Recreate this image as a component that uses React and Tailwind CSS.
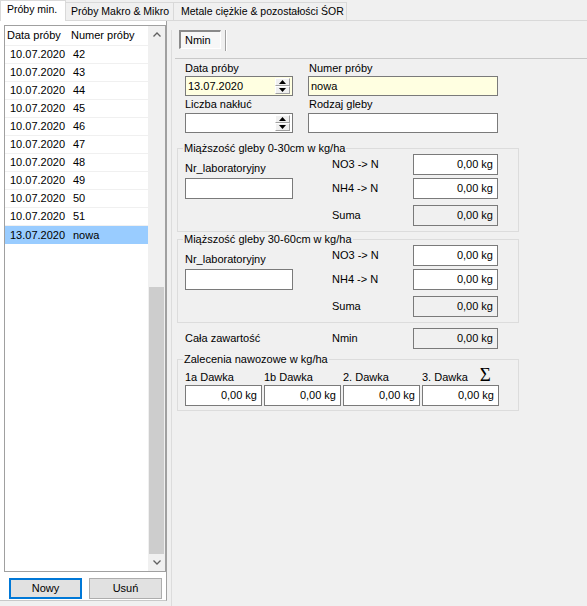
import React from 'react';

const samples = ['42', '43', '44', '45', '46', '47', '48', '49', '50', '51'];

function Arrow({ down }) {
  return (
    <svg width="7" height="4" viewBox="0 0 7 4">
      <path d={down ? 'M0 0H7L3.5 4Z' : 'M0 4H7L3.5 0Z'} fill="#000" />
    </svg>
  );
}

function Chevron({ down }) {
  return (
    <svg width="8" height="5" viewBox="0 0 8 5">
      <path d={down ? 'M0.5 0.5L4 4L7.5 0.5' : 'M0.5 4.5L4 1L7.5 4.5'} fill="none" stroke="#606060" strokeWidth="1.3" />
    </svg>
  );
}

function Spin() {
  return (
    <div className="mr-[2px] flex h-[16px] w-[15px] flex-col">
      <div className="flex h-[8px] items-center justify-center border border-[#a0a0a0] border-t-white border-l-white bg-[#f0f0f0]">
        <Arrow />
      </div>
      <div className="flex h-[8px] items-center justify-center border border-[#a0a0a0] border-t-white border-l-white bg-[#f0f0f0]">
        <Arrow down />
      </div>
    </div>
  );
}

function Num({ gray, className = '' }) {
  return (
    <div
      className={`flex h-[21px] items-center justify-end border border-[#7a7a7a] pr-[4px] ${
        gray ? 'bg-[#f0f0f0]' : 'bg-white'
      } ${className}`}
    >
      0,00 kg
    </div>
  );
}

function Row({ label, gray, className = '' }) {
  return (
    <div className={`flex h-[21px] items-center ${className}`}>
      <span className="w-[81px]">{label}</span>
      <Num gray={gray} className="w-[85px]" />
    </div>
  );
}

function Layer({ title, className = '' }) {
  return (
    <fieldset className={`ml-[5px] w-[342px] border border-[#dcdcdc] pb-[5px] pl-[7px] ${className}`}>
      <legend className="-ml-[2px] px-[1px] leading-[12px]">{title}</legend>
      <div className="flex">
        <div className="w-[108px] pt-[8px]">
          <div className="leading-[13px]">Nr_laboratoryjny</div>
          <div className="mt-[3px] h-[21px] border border-[#7a7a7a] bg-white" />
        </div>
        <div className="ml-[39px] flex flex-col">
          <Row label="NO3 -> N" />
          <Row label="NH4 -> N" className="mt-[3px]" />
          <Row label="Suma" gray className="mt-[6px]" />
        </div>
      </div>
    </fieldset>
  );
}

export default function App() {
  return (
    <div className="flex h-[606px] w-[587px] flex-col overflow-hidden bg-[#f0f0f0] font-['Liberation_Sans',Arial,sans-serif] text-[11px] text-black">
      {/* Tabs */}
      <div className="flex h-[21px] items-end border-b border-[#d9d9d9] text-[10.5px]">
        <div className="relative z-10 -mb-px flex h-[21px] w-[66px] items-center border-x border-t border-[#d9d9d9] bg-white pb-[2px] pl-[6px]">
          Próby min.
        </div>
        <div className="flex h-[18px] w-[108px] items-center border-r border-t border-[#d9d9d9] pl-[5px]">
          Próby Makro &amp; Mikro
        </div>
        <div className="flex h-[18px] w-[173px] items-center border-r border-t border-[#d9d9d9] pl-[7px]">
          Metale ciężkie &amp; pozostałości ŚOR
        </div>
      </div>

      <div className="flex">
        {/* Sample list */}
        <div className="flex h-[580px] w-[167px] flex-col border-b border-r border-[#a0a0a0] border-b-[#c8c8c8] bg-white pl-[4px] pt-[4px]">
          <div className="flex h-[547px] w-[162px] border border-[#a0a0a0]">
            <div className="w-[143px]">
              <div className="flex h-[20px] items-center border-b border-[#f0f0f0] pl-[2px]">
                <span className="w-[64px]">Data próby</span>
                <span>Numer próby</span>
              </div>
              {samples.map((n) => (
                <div key={n} className="flex h-[18px] items-center border-b border-[#f0f0f0] pl-[5px]">
                  <span className="w-[63px]">10.07.2020</span>
                  <span>{n}</span>
                </div>
              ))}
              <div className="flex h-[18px] items-center bg-[#99ccff] pl-[5px]">
                <span className="w-[63px]">13.07.2020</span>
                <span>nowa</span>
              </div>
            </div>
            <div className="flex w-[17px] flex-col bg-[#f0f0f0]">
              <div className="flex h-[17px] items-center justify-center">
                <Chevron />
              </div>
              <div className="h-[244px]" />
              <div className="mx-[1px] h-[267px] bg-[#cdcdcd]" />
              <div className="flex h-[17px] items-center justify-center">
                <Chevron down />
              </div>
            </div>
          </div>
          <div className="mt-[6px] flex gap-[7px] pl-[5px]">
            <button className="flex h-[21px] w-[73px] items-center justify-center border-2 border-[#0078d7] bg-[#e1e1e1]">
              Nowy
            </button>
            <button className="flex h-[21px] w-[73px] items-center justify-center border border-[#adadad] bg-[#e1e1e1]">
              Usuń
            </button>
          </div>
        </div>

        {/* Form */}
        <div className="flex-1 pl-[4px]">
          <div className="h-full border-l border-[#dcdcdc]">
            <div className="ml-[7px] mt-[9px] flex h-[21px] items-start">
              <div className="flex h-[19px] w-[42px] items-center border-l-2 border-t-2 border-[#8a8a8a] border-b border-r border-b-white border-r-white bg-[#f7f7f7] pl-[4px]">
                Nmin
              </div>
              <div className="ml-[4px] h-[21px] w-[2px] border-l border-r border-[#a0a0a0] border-r-white" />
            </div>
            <div className="ml-[3px] mt-[7px] h-px bg-[#c8c8c8]" />

            <div className="ml-[13px] mt-[3px] flex">
              <div className="w-[108px]">
                <div className="leading-[13px]">Data próby</div>
                <div className="mt-[1px] flex h-[20px] items-center border border-[#7a7a7a] bg-[#ffffe1] pl-[2px]">
                  <span className="flex-1">13.07.2020</span>
                  <Spin />
                </div>
                <div className="mt-[2px] leading-[13px]">Liczba nakłuć</div>
                <div className="mt-[2px] flex h-[20px] items-center justify-end border border-[#7a7a7a] bg-white">
                  <Spin />
                </div>
              </div>
              <div className="ml-[15px] w-[190px]">
                <div className="pl-[1px] leading-[13px]">Numer próby</div>
                <div className="mt-[1px] flex h-[20px] items-center border border-[#7a7a7a] bg-[#ffffe1] pl-[2px]">
                  nowa
                </div>
                <div className="mt-[2px] pl-[1px] leading-[13px]">Rodzaj gleby</div>
                <div className="mt-[2px] h-[20px] border border-[#7a7a7a] bg-white" />
              </div>
            </div>

            <Layer title="Miąższość gleby 0-30cm w kg/ha" className="mt-[9px]" />
            <Layer title="Miąższość gleby 30-60cm w kg/ha" className="mt-[1px]" />

            <div className="ml-[13px] mt-[5px] flex h-[21px] items-center">
              <span className="w-[147px]">Cała zawartość</span>
              <span className="w-[81px]">Nmin</span>
              <Num gray className="w-[85px]" />
            </div>

            <fieldset className="ml-[5px] mt-[4px] w-[342px] border border-[#dcdcdc] pb-[4px] pl-[7px]">
              <legend className="-ml-[2px] px-[1px] leading-[12px]">Zalecenia nawozowe w kg/ha</legend>
              <div className="mt-[4px] flex h-[16px] items-center">
                <span className="w-[79px]">1a Dawka</span>
                <span className="w-[79px]">1b Dawka</span>
                <span className="w-[79px]">2. Dawka</span>
                <span>3. Dawka</span>
                <span className="mb-[6px] ml-[12px] font-['Liberation_Serif',serif] text-[19px] leading-none">Σ</span>
              </div>
              <div className="flex gap-[2px]">
                <Num className="w-[77px]" />
                <Num className="w-[77px]" />
                <Num className="w-[77px]" />
                <Num className="w-[77px]" />
              </div>
            </fieldset>
          </div>
        </div>
      </div>
    </div>
  );
}
